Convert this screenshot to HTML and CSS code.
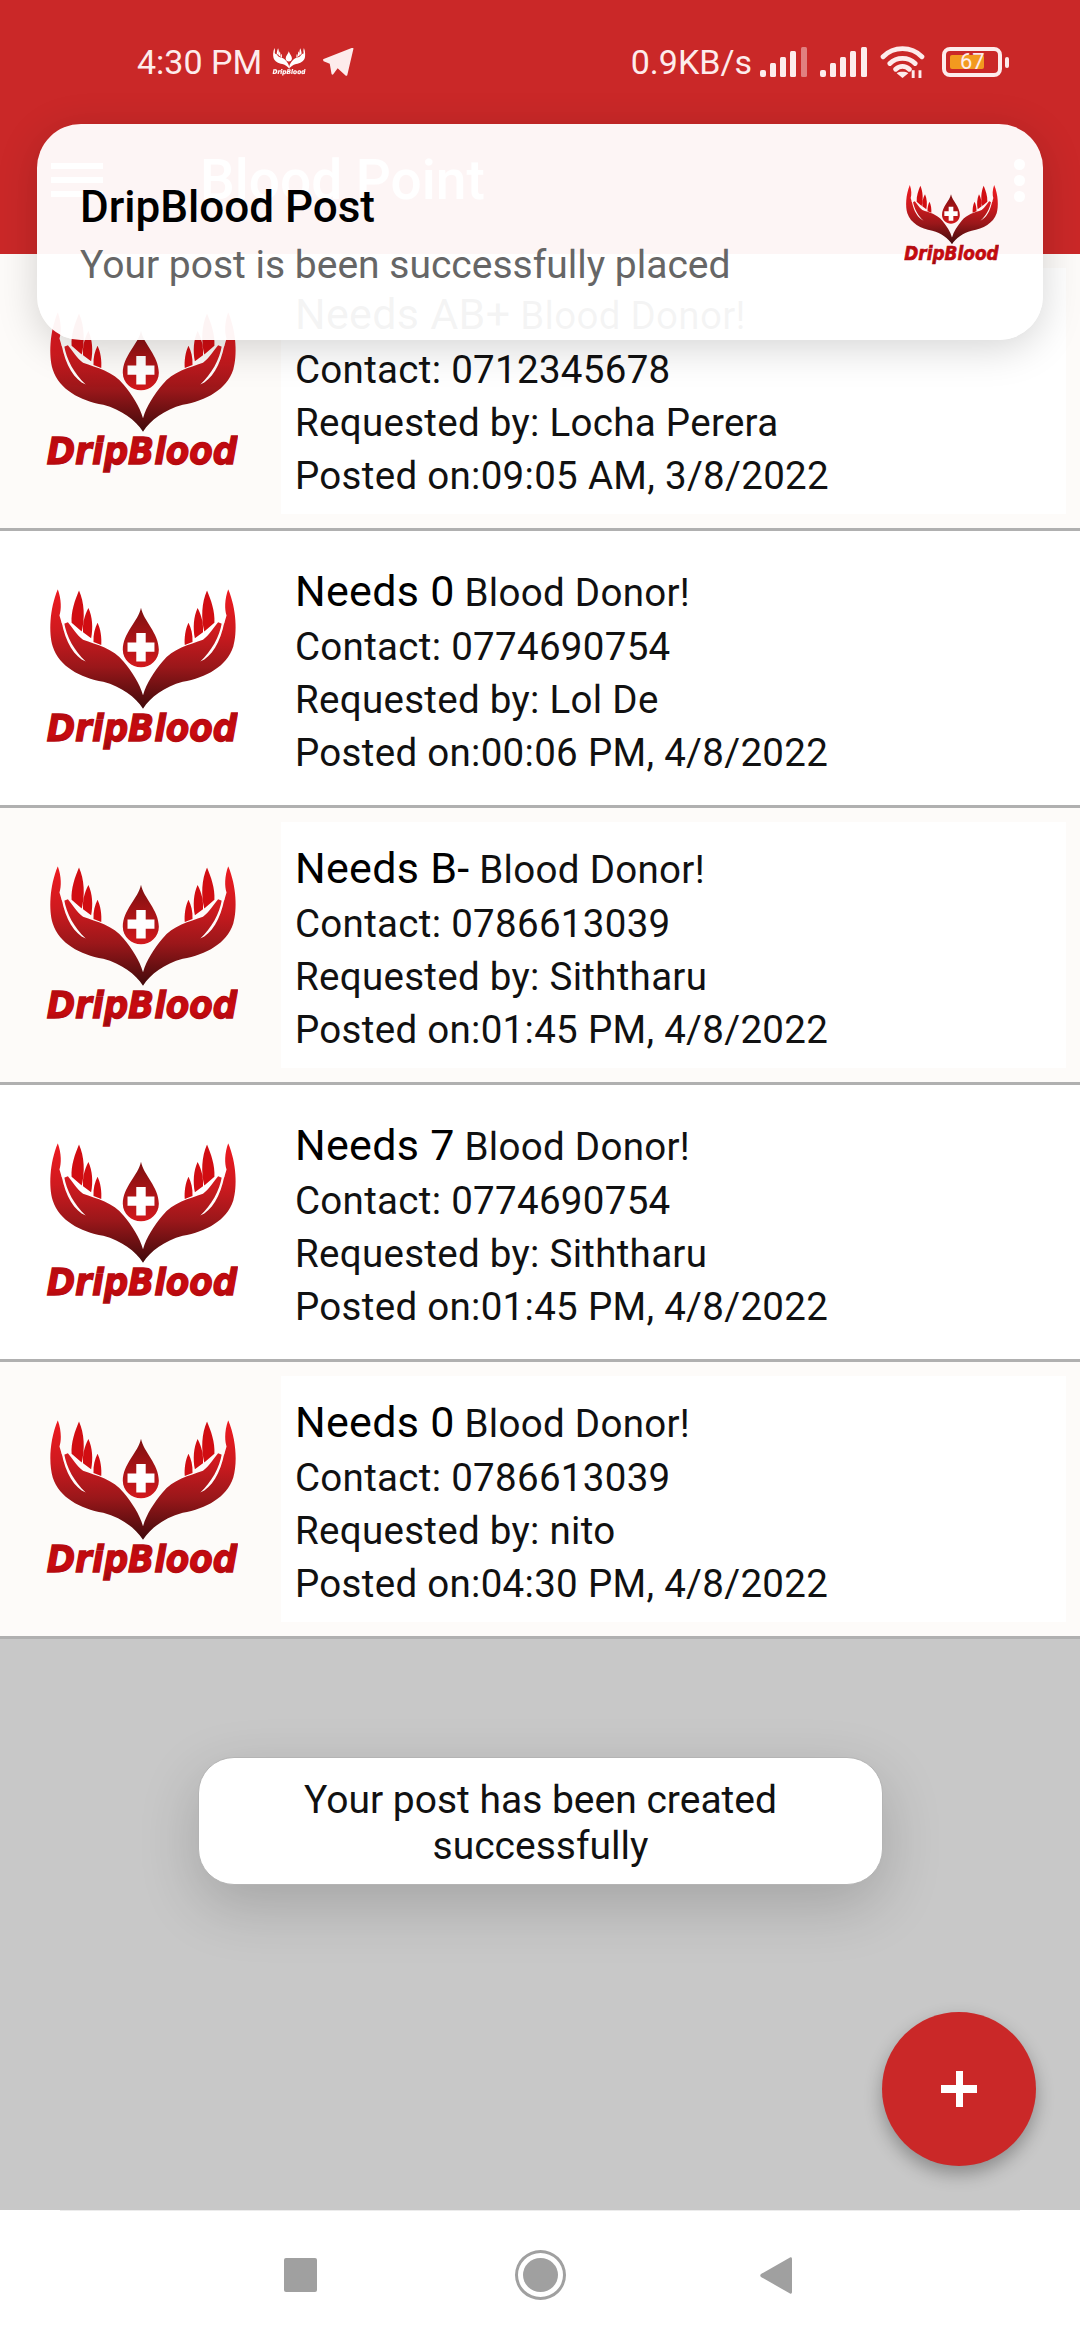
FILE: index.html
```html
<!DOCTYPE html>
<html lang="en">
<head>
    <meta charset="UTF-8">
    <title>Blood Point</title>
    <link rel="stylesheet" href="styles.css">
</head>
<body>
    <svg class="defs" width="0" height="0">
        <defs>
            <linearGradient id="handGrad" gradientUnits="userSpaceOnUse" x1="0" y1="0" x2="0" y2="355">
                <stop offset="0" stop-color="#ee1a20"/>
                <stop offset="0.35" stop-color="#cf1a1f"/>
                <stop offset="0.65" stop-color="#9a171a"/>
                <stop offset="1" stop-color="#400a0b"/>
            </linearGradient>
            <linearGradient id="dropGrad" gradientUnits="userSpaceOnUse" x1="0" y1="55" x2="0" y2="232">
                <stop offset="0" stop-color="#7d0f10"/>
                <stop offset="1" stop-color="#d3191d"/>
            </linearGradient>
            <linearGradient id="wordGrad" x1="0" y1="0" x2="0" y2="1">
                <stop offset="0" stop-color="#a80a0e"/>
                <stop offset="0.6" stop-color="#d00a10"/>
                <stop offset="1" stop-color="#8f0a0d"/>
            </linearGradient>
            <g id="hand">
                <path fill="url(#handGrad)" d="M35 0C46 30 46 60 40 78L48 105L65 98C80 115 90 135 110 150C150 165 200 175 230 215C255 245 278 280 288 315V355C265 320 225 290 170 275C100 262 40 230 20 170C8 130 10 60 35 0Z"/>
                <path fill="#fefcfb" d="M46 95L54 100C60 140 85 185 118 215C85 200 58 160 46 95Z"/>
                <path fill="#d10d12" d="M98 4C114 40 116 85 106 126L76 100C74 66 86 32 98 4ZM126 56C138 82 140 115 134 146L110 128C108 104 114 78 126 56ZM153 100C162 118 166 145 164 166L141 157C140 135 145 116 153 100Z"/>
            </g>
            <symbol id="logo" viewBox="0 0 570 480">
                <use href="#hand"/>
                <use href="#hand" transform="translate(576 0) scale(-1 1)"/>
                <path fill="url(#dropGrad)" d="M282 55C290 95 335 130 335 180C335 210 310 232 282 232C254 232 228 210 228 180C228 130 274 95 282 55Z"/>
                <path fill="#fff" d="M268 130H296V158H322V186H296V215H268V186H242V158H268Z"/>
                <text class="logo-word" x="285" y="452" text-anchor="middle" textLength="566" lengthAdjust="spacingAndGlyphs">DripBlood</text>
            </symbol>
        </defs>
    </svg>

    <div class="phone">
        <header class="topbar">
            <div class="statusbar">
                <div class="status-left">
                    <span>4:30 PM</span>
                    <svg class="mini-logo" viewBox="0 0 570 480"><use href="#logo"/></svg>
                    <svg class="tg-icon" viewBox="0 0 36 32"><path d="M35 1L28 31C27.500 32 26.500 32 26 31.500L17 23L12 30C11 31 10.500 30.500 10 29.500L8 18L1 15C0 14 0 13 1 12.500L33 0C34.500 -0.300 35.300 0 35 1Z"/></svg>
                </div>
                <div class="status-right">
                    <span>0.9KB/s</span>
                    <svg class="signal" viewBox="0 0 47 30"><rect x="0" y="23" width="6" height="7" rx="2"/><rect x="10" y="16" width="6" height="14" rx="1.500"/><rect x="20" y="10" width="6" height="20" rx="1.500"/><rect x="30" y="4" width="6" height="26" rx="1.500"/><rect x="41" y="0" width="6" height="30" rx="1.500" class="dim"/></svg>
                    <svg class="signal second" viewBox="0 0 47 30"><rect x="0" y="23" width="6" height="7" rx="2"/><rect x="10" y="16" width="6" height="14" rx="1.500"/><rect x="20" y="10" width="6" height="20" rx="1.500"/><rect x="30" y="4" width="6" height="26" rx="1.500"/><rect x="41" y="0" width="6" height="30" rx="1.500"/></svg>
                    <svg class="wifi" viewBox="0 0 46 34">
                        <path d="M3 11C14 0 32 0 43 11M10 18C17 11 29 11 36 18M16 24C20 20 26 20 30 24" fill="none" stroke="#fdecec" stroke-width="5" stroke-linecap="round"/>
                        <path d="M23 33L17 28C20 26 26 26 29 28Z" fill="#fdecec"/>
                        <path d="M34 25V33M41 25V33" stroke="#fdecec" stroke-width="3"/>
                    </svg>
                    <div class="battery"><div class="battery-fill"></div><span class="battery-num">67</span></div>
                    <div class="battery-tip"></div>
                </div>
            </div>
            <div class="appbar">
                <div class="hamburger"><i></i><i></i><i></i></div>
                <h1>Blood Point</h1>
                <div class="kebab"><i></i><i></i><i></i></div>
            </div>
        </header>

        <main class="feed">
            <article class="post tint">
                <div class="post-logo"><svg viewBox="0 0 570 480"><use href="#logo"/></svg></div>
                <div class="post-text">
                    <p class="post-title"><b>Needs AB+</b> Blood Donor!</p>
                    <p>Contact: 0712345678</p>
                    <p>Requested by: Locha Perera</p>
                    <p>Posted on:09:05 AM, 3/8/2022</p>
                </div>
            </article>
            <article class="post">
                <div class="post-logo"><svg viewBox="0 0 570 480"><use href="#logo"/></svg></div>
                <div class="post-text">
                    <p class="post-title"><b>Needs 0</b> Blood Donor!</p>
                    <p>Contact: 0774690754</p>
                    <p>Requested by: Lol De</p>
                    <p>Posted on:00:06 PM, 4/8/2022</p>
                </div>
            </article>
            <article class="post tint">
                <div class="post-logo"><svg viewBox="0 0 570 480"><use href="#logo"/></svg></div>
                <div class="post-text">
                    <p class="post-title"><b>Needs B-</b> Blood Donor!</p>
                    <p>Contact: 0786613039</p>
                    <p>Requested by: Siththaru</p>
                    <p>Posted on:01:45 PM, 4/8/2022</p>
                </div>
            </article>
            <article class="post">
                <div class="post-logo"><svg viewBox="0 0 570 480"><use href="#logo"/></svg></div>
                <div class="post-text">
                    <p class="post-title"><b>Needs 7</b> Blood Donor!</p>
                    <p>Contact: 0774690754</p>
                    <p>Requested by: Siththaru</p>
                    <p>Posted on:01:45 PM, 4/8/2022</p>
                </div>
            </article>
            <article class="post tint">
                <div class="post-logo"><svg viewBox="0 0 570 480"><use href="#logo"/></svg></div>
                <div class="post-text">
                    <p class="post-title"><b>Needs 0</b> Blood Donor!</p>
                    <p>Contact: 0786613039</p>
                    <p>Requested by: nito</p>
                    <p>Posted on:04:30 PM, 4/8/2022</p>
                </div>
            </article>
        </main>

        <nav class="navbar">
            <div class="nav-square"></div>
            <div class="nav-home"><div></div></div>
            <svg class="nav-back" viewBox="0 0 32 37"><path d="M30 0.500C31 0 32 0.500 32 2V35C32 36.500 31 37 30 36.500L1 20C0 19.300 0 17.700 1 17Z"/></svg>
        </nav>

        <!-- things floating over the list -->
        <div class="notification">
            <div class="notification-text">
                <div class="notification-title">DripBlood Post</div>
                <div class="notification-body">Your post is been successfully placed</div>
            </div>
            <svg class="notification-logo" viewBox="0 0 570 480"><use href="#logo"/></svg>
        </div>
        <div class="toast">Your post has been created successfully</div>
        <button class="fab"><span></span></button>
    </div>
</body>
</html>
```

FILE: styles.css
```css
* {
    box-sizing: border-box;
}

body {
    margin: 0;
    font-family: Roboto, "Liberation Sans", sans-serif;
    background: #fff;
}

p {
    margin: 0;
}

.defs {
    position: absolute;
}

.logo-word {
    font-family: "DejaVu Sans", sans-serif;
    font-size: 112px;
    font-weight: bold;
    font-style: italic;
    fill: url(#wordGrad);
    stroke: #b80a0f;
    stroke-width: 4px;
}

.phone {
    position: relative;
    width: 1080px;
    height: 2340px;
    display: flex;
    flex-direction: column;
    overflow: hidden;
    background: #c8c8c8;
}

.topbar {
    height: 254px;
    background: #ca2828;
    color: #fdecec;
}

.statusbar {
    height: 124px;
    padding: 0 71px 0 137px;
    display: flex;
    justify-content: space-between;
    align-items: center;
    font-size: 34px;
}

.status-left,
.status-right {
    display: flex;
    align-items: center;
}

.mini-logo {
    width: 34px;
    height: 28px;
    margin-left: 10px;
    filter: brightness(0) invert(1);
}

.tg-icon {
    width: 33px;
    height: 28px;
    margin-left: 16px;
    fill: #fdecec;
}

.signal {
    width: 47px;
    height: 30px;
    margin-left: 8px;
    fill: #fdecec;
}

.signal.second {
    margin-left: 13px;
}

.signal .dim {
    opacity: 0.45;
}

.wifi {
    width: 45px;
    height: 33px;
    margin-left: 13px;
}

.battery {
    position: relative;
    width: 60px;
    height: 30px;
    margin-left: 17px;
    border: 4px solid #fdecec;
    border-radius: 8px;
    padding: 4px;
}

.battery-fill {
    width: 34px;
    height: 100%;
    background: #f29a1f;
    border-radius: 2px;
}

.battery-num {
    position: absolute;
    left: 14px;
    top: -4px;
    font-size: 22px;
    line-height: 30px;
}

.battery-tip {
    width: 4px;
    height: 11px;
    margin-left: 3px;
    background: #fdecec;
    border-radius: 2px;
}

.appbar {
    height: 130px;
    display: flex;
    align-items: center;
    padding: 0 55px 18px 51px;
}

.appbar h1 {
    margin: 0 0 0 97px;
    font-size: 55px;
    font-weight: 500;
    color: #fff;
    flex: 1;
}

.hamburger i {
    display: block;
    width: 52px;
    height: 6px;
    margin: 8px 0;
    background: #fff;
}

.kebab i {
    display: block;
    width: 11px;
    height: 11px;
    margin: 5px 0;
    background: #fff;
    border-radius: 50%;
}

.feed {
    flex: 1;
}

.post {
    height: 277px;
    display: flex;
    background: #fff;
    border-bottom: 3px solid #b0b0b0;
}

.post.tint {
    background: #fdfbf9;
}

.post-logo {
    width: 281px;
    display: flex;
    align-items: center;
    justify-content: center;
    padding: 4px 0 0 2px;
}

.post-logo svg {
    width: 192px;
    height: 162px;
}

.post-text {
    flex: 1;
    margin: 14px 14px 14px 0;
    padding: 20px 14px 0;
    background: #fff;
    font-size: 38.5px;
    line-height: 53px;
    color: #111;
    letter-spacing: 0.3px;
}

.post-title {
    margin-bottom: 1px;
}

.post-title b {
    font-size: 43px;
    font-weight: 400;
    color: #000;
}

.navbar {
    position: relative;
    height: 130px;
    padding-left: 284px;
    background: #fff;
    display: flex;
    align-items: center;
}

.navbar::before {
    content: "";
    position: absolute;
    left: 60px;
    right: 60px;
    top: 0;
    height: 1px;
    background: #ececec;
}

.nav-square {
    width: 33px;
    height: 34px;
    background: #a0a0a0;
    border-radius: 2px;
}

.nav-home {
    width: 51px;
    height: 50px;
    margin: 0 194px 0 198px;
    padding: 5px;
    border: 3px solid #a0a0a0;
    border-radius: 50%;
}

.nav-home div {
    width: 100%;
    height: 100%;
    background: #a0a0a0;
    border-radius: 50%;
}

.nav-back {
    width: 32px;
    height: 37px;
    fill: #a0a0a0;
}

.notification {
    position: absolute;
    left: 37px;
    top: 124px;
    width: 1006px;
    height: 216px;
    padding: 58px 44px 0 43px;
    display: flex;
    justify-content: space-between;
    background: rgba(255, 255, 255, 0.955);
    border-radius: 44px;
    box-shadow: 0 8px 40px rgba(0, 0, 0, 0.17);
}

.notification-title {
    font-size: 44px;
    font-weight: 500;
    line-height: 50px;
    color: #000;
}

.notification-body {
    margin-top: 8px;
    font-size: 39px;
    line-height: 50px;
    color: #666;
}

.notification-logo {
    width: 95px;
    height: 80px;
    margin-top: 3px;
}

.toast {
    position: absolute;
    left: 198px;
    top: 1757px;
    width: 685px;
    height: 128px;
    padding: 19px 90px;
    text-align: center;
    font-size: 39px;
    line-height: 46px;
    color: #111;
    background: #fff;
    border: 1px solid #b4b4b4;
    border-radius: 36px;
    box-shadow: 0 20px 60px rgba(0, 0, 0, 0.18);
}

.fab {
    position: absolute;
    left: 882px;
    top: 2012px;
    width: 154px;
    height: 154px;
    border: none;
    border-radius: 50%;
    background: #ca2828;
    box-shadow: 0 8px 18px rgba(0, 0, 0, 0.3);
}

.fab span {
    position: absolute;
    left: 59px;
    top: 59px;
    width: 36px;
    height: 36px;
    background:
        linear-gradient(#fff, #fff) center / 100% 8px no-repeat,
        linear-gradient(#fff, #fff) center / 7px 100% no-repeat;
}
```
